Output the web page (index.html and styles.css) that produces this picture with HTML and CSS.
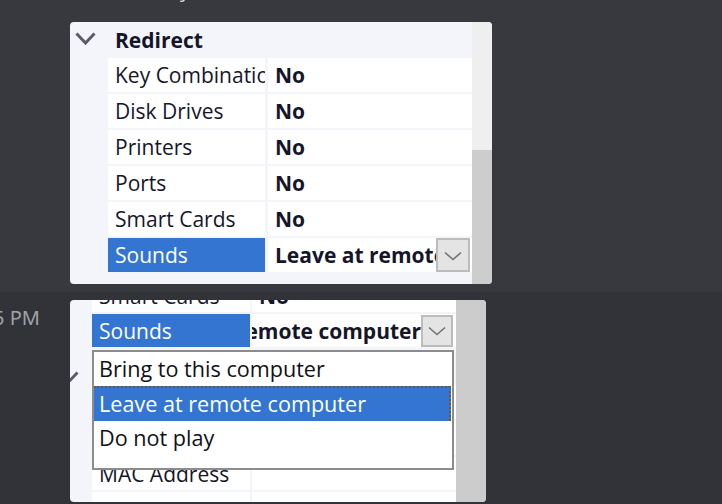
FILE: index.html
```html
<!DOCTYPE html>
<html>
<head>
<meta charset="utf-8">
<link rel="stylesheet" href="styles.css">
</head>
<body>
<div class="prev"><span class="prev-text">y</span></div>

<div class="msg msg1">
  <div class="shot shot1">
    <div class="pg">
      <div class="cat">
        <div class="gut">
          <svg class="cat-chev" width="21" height="13" viewBox="0 0 21 13"><path d="M1.5 1.5 L10.5 11 L19.5 1.5" fill="none" stroke="#5a5d63" stroke-width="3"/></svg>
        </div>
        <div class="cat-label">Redirect</div>
      </div>
      <div class="row"><div class="gut"></div><div class="name">Key Combinations</div><div class="val">No</div></div>
      <div class="row"><div class="gut"></div><div class="name">Disk Drives</div><div class="val">No</div></div>
      <div class="row"><div class="gut"></div><div class="name">Printers</div><div class="val">No</div></div>
      <div class="row"><div class="gut"></div><div class="name">Ports</div><div class="val">No</div></div>
      <div class="row"><div class="gut"></div><div class="name">Smart Cards</div><div class="val">No</div></div>
      <div class="row"><div class="gut"></div><div class="name sel">Sounds</div>
        <div class="val edit"><div class="val-text">Leave at remote computer</div>
          <div class="dd"><svg width="18" height="10" viewBox="0 0 18 10"><path d="M1 1.5 L9 8.5 L17 1.5" fill="none" stroke="#737373" stroke-width="1.6"/></svg></div>
        </div>
      </div>
    </div>
    <div class="sb"><div class="track"></div><div class="thumb"></div></div>
  </div>
</div>

<div class="msg msg2">
  <div class="stamp"><span class="stamp-text">5 PM</span></div>
  <div class="shot shot2">
    <div class="pg pg2">
      <div class="row2 partial"><div class="gut"></div><div class="name">Smart Cards</div><div class="val">No</div></div>
      <div class="row2"><div class="gut"></div><div class="name sel">Sounds</div>
        <div class="val edit2"><div class="val-text2"><span>Leave at remote computer</span></div>
          <div class="dd dd2"><svg width="18" height="10" viewBox="0 0 18 10"><path d="M1 1.5 L9 8.5 L17 1.5" fill="none" stroke="#737373" stroke-width="1.6"/></svg></div>
        </div>
      </div>
      <div class="row2 cat2"><div class="gut">
          <svg class="cat-chev2" width="21" height="13" viewBox="0 0 21 13"><path d="M1.5 1.5 L10.5 11 L19.5 1.5" fill="none" stroke="#5a5d63" stroke-width="3"/></svg>
        </div><div class="cat-label">Network</div></div>
      <div class="row2 h34"><div class="gut"></div><div class="name"></div><div class="val"></div></div>
      <div class="row2 h34"><div class="gut"></div><div class="name"></div><div class="val"></div></div>
      <div class="row2"><div class="gut"></div><div class="name">MAC Address</div><div class="val"></div></div>
      <div class="row2"><div class="gut"></div><div class="name"></div><div class="val"></div></div>
    </div>
    <div class="sb2"></div>
    <ul class="list">
      <li class="item">Bring to this computer</li>
      <li class="item hi">Leave at remote computer</li>
      <li class="item">Do not play</li>
    </ul>
  </div>
</div>
</body>
</html>
```

FILE: styles.css
```css
html, body {
  margin: 0;
  padding: 0;
}
body {
  width: 722px;
  height: 504px;
  overflow: hidden;
  background: #38393e;
  font-family: "Open Sans", "Noto Sans", sans-serif;
}
.prev {
  height: 22px;
  overflow: hidden;
  padding-left: 180px;
}
.prev-text {
  display: block;
  margin-top: -20px;
  font-size: 20px;
  line-height: 20px;
  color: #dcddde;
}
.msg {
  display: flex;
}
.msg1 {
  padding-left: 70px;
  height: 270px;
}
.msg2 {
  background: #323338;
  padding-top: 8px;
  height: 204px;
}
.stamp {
  width: 70px;
  flex: none;
  overflow: hidden;
  padding-top: 4px;
}
.stamp-text {
  display: block;
  margin-left: -7px;
  white-space: nowrap;
  font-family: "Noto Sans", sans-serif;
  font-size: 20px;
  line-height: 28px;
  color: #a0a2a7;
}
.shot {
  display: flex;
  border-radius: 4px;
  overflow: hidden;
  background: #f3f5fa;
  color: #16162a;
}
.shot1 {
  width: 422px;
  height: 262px;
}
.pg {
  width: 402px;
  display: flex;
  flex-direction: column;
  gap: 2px;
  font-size: 21px;
}
.cat {
  height: 36px;
  display: flex;
  margin-bottom: -2px;
}
.cat .gut {
  width: 38px;
  flex: none;
}
.cat-chev {
  display: block;
  margin: 10px 0 0 5px;
}
.cat-label {
  padding-left: 7px;
  font-weight: 700;
  line-height: 36px;
}
.row {
  display: grid;
  grid-template-columns: 35px 157px 204px;
  column-gap: 3px;
  height: 34px;
  line-height: 34px;
}
.name {
  background: #ffffff;
  padding: 0 2px 0 7px;
  white-space: nowrap;
  overflow: hidden;
}
.val {
  background: #ffffff;
  padding-left: 7px;
  font-weight: 700;
  white-space: nowrap;
  overflow: hidden;
}
.sel {
  background: #3375d1;
  color: #ffffff;
}
.edit {
  display: flex;
  padding-right: 2px;
}
.val-text {
  flex: 1;
  overflow: hidden;
  white-space: nowrap;
}
.dd {
  width: 34px;
  flex: none;
  box-sizing: border-box;
  border: 2px solid #bcbcbc;
  background: #e4e4e4;
  display: flex;
  align-items: center;
  justify-content: center;
}
.dd svg {
  display: block;
  margin-top: 2px;
}
.sb {
  width: 20px;
  display: flex;
  flex-direction: column;
}
.track {
  height: 128px;
  background: #efefef;
}
.thumb {
  flex: 1;
  background: #cdcdcd;
}

/* second shot */
.shot2 {
  position: relative;
  width: 416px;
  height: 202px;
}
.pg2 {
  width: 386px;
}
.row2 {
  display: grid;
  grid-template-columns: 20px 158px 204px;
  column-gap: 2px;
  height: 33px;
  line-height: 33px;
  flex: none;
}
.row2 .name, .row2 .val {
  padding-top: 1px;
}
.partial {
  margin-top: -21px;
}
.h34 {
  height: 34px;
}
.cat2 {
  display: flex;
  height: 34px;
}
.cat2 .gut {
  width: 22px;
  flex: none;
}
.cat-chev2 {
  display: block;
  margin: 22px 0 0 -12px;
}
.edit2 {
  display: flex;
  padding: 0 3px 0 0;
}
.val-text2 {
  flex: 1;
  overflow: hidden;
  display: flex;
  justify-content: flex-end;
  white-space: nowrap;
  padding-right: 0;
}
.val-text2 span {
  flex: none;
}
.dd2 {
  width: 32px;
}
.dd2 svg {
  margin-top: 0;
}
.sb2 {
  width: 30px;
  background: #cccccc;
}
.list {
  position: absolute;
  left: 22px;
  top: 50px;
  width: 362px;
  height: 120px;
  box-sizing: border-box;
  margin: 0;
  padding: 0;
  list-style: none;
  background: #ffffff;
  border: 2px solid #8c8c8c;
  font-size: 21.6px;
  color: #111118;
  display: flex;
  flex-direction: column;
}
.item {
  height: 34px;
  line-height: 34px;
  padding-left: 5px;
  white-space: nowrap;
}
.hi {
  height: 35px;
  box-sizing: border-box;
  background: #3375d1;
  color: #ffffff;
  border-top: 2px dotted #7a5426;
  border-right: 2px dotted #7a5426;
  margin-right: 1px;
  line-height: 32px;
}
```
